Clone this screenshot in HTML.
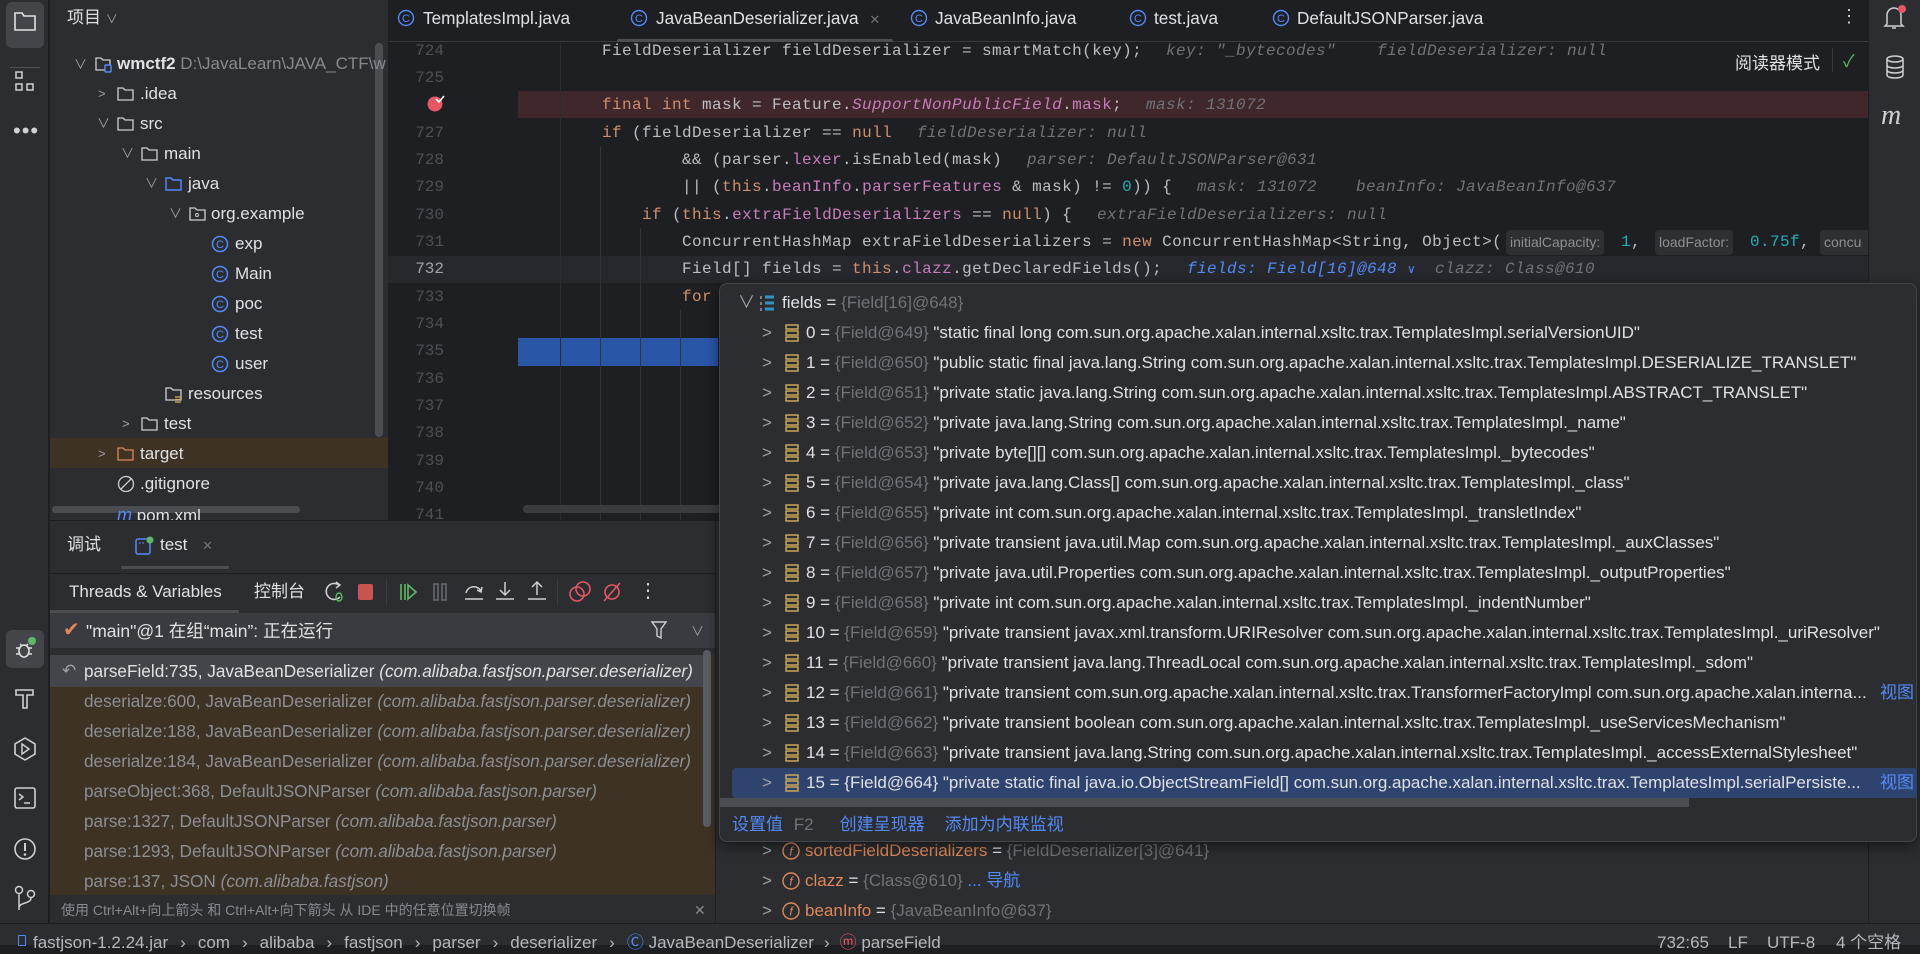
<!DOCTYPE html>
<html><head><meta charset="utf-8">
<style>
*{margin:0;padding:0;box-sizing:border-box}
body{width:1920px;height:945px;overflow:hidden;background:#1e1f22;font-family:"Liberation Sans","Noto Sans CJK SC",sans-serif;font-size:17px;color:#dfe1e5;position:relative}
.a{position:absolute;white-space:nowrap}
.code{font-family:"Liberation Mono",monospace;font-size:16px;letter-spacing:0.4px;color:#bcbec4;height:27px;line-height:27px}
.k{color:#cf8e6d}.f{color:#c77dbb}.fi{color:#c77dbb;font-style:italic}.n{color:#2aacb8}
.h{color:#6f737a;font-style:italic}
.ln{font-family:"Liberation Mono",monospace;font-size:16px;color:#4b5059;width:40px;text-align:right;left:404px;height:27px;line-height:27px}
.row{height:30px;line-height:30px}
.g{color:#868a91}
.fr{color:#8c8f94}
.fr i,.fr0 i{font-style:italic}
.chev{color:#9da0a8;font-size:13px}
.vrow{height:30px;line-height:30px;font-size:17px}
.frm{font-size:17.2px}
.blue{color:#548af7}
.tab{font-size:17.2px}
.sb{line-height:22px;color:#b4b8bf;font-size:17px;top:932px}
</style></head><body>

<!-- left tool strip -->
<div class="a" style="left:0;top:0;width:49px;height:923px;background:#2b2d30;border-right:1px solid #1e1f22"></div>
<div class="a" style="left:6px;top:2px;width:38px;height:46px;border-radius:6px;background:#43454a"></div>
<svg class="a" style="left:13px;top:10px" width="24" height="22" viewBox="0 0 24 22"><path d="M2 3h7l2 3h11v14H2z" fill="none" stroke="#dfe1e5" stroke-width="1.6"/></svg>
<div class="a" style="left:10px;top:67px;width:30px;height:1px;background:#4e5157"></div>
<svg class="a" style="left:14px;top:70px" width="22" height="24"><rect x="2" y="2" width="6" height="6" fill="none" stroke="#ced0d6" stroke-width="1.5"/><rect x="2" y="14" width="6" height="6" fill="none" stroke="#ced0d6" stroke-width="1.5"/><rect x="13" y="14" width="6" height="6" fill="none" stroke="#ced0d6" stroke-width="1.5"/></svg>
<div class="a" style="left:13px;top:118px;font-size:22px;color:#ced0d6;letter-spacing:1px">•••</div>
<div class="a" style="left:6px;top:630px;width:38px;height:38px;border-radius:6px;background:#43454a"></div>
<svg class="a" style="left:12px;top:636px" width="26" height="26"><ellipse cx="12" cy="15" rx="5" ry="6" fill="none" stroke="#dfe1e5" stroke-width="1.6"/><path d="M4 12h3M4 18h3M17 12h3M17 18h3M8 8l2 2M16 8l-2 2" stroke="#dfe1e5" stroke-width="1.5"/><circle cx="20" cy="5" r="4" fill="#5fb865"/></svg>
<svg class="a" style="left:13px;top:686px" width="24" height="26"><path d="M3 4h17v5H14v13h-4V9H3z" fill="none" stroke="#ced0d6" stroke-width="1.6"/></svg>
<svg class="a" style="left:12px;top:736px" width="26" height="26"><path d="M13 2l10 6v10l-10 6-10-6V8z" fill="none" stroke="#ced0d6" stroke-width="1.6"/><path d="M10 8l7 5-7 5z" fill="none" stroke="#ced0d6" stroke-width="1.5"/></svg>
<svg class="a" style="left:13px;top:786px" width="24" height="24"><rect x="2" y="2" width="20" height="20" rx="2" fill="none" stroke="#ced0d6" stroke-width="1.6"/><path d="M6 8l4 3-4 3M11 17h6" stroke="#ced0d6" stroke-width="1.5" fill="none"/></svg>
<svg class="a" style="left:12px;top:836px" width="26" height="26"><circle cx="13" cy="13" r="10" fill="none" stroke="#ced0d6" stroke-width="1.6"/><path d="M13 7v8" stroke="#ced0d6" stroke-width="2"/><circle cx="13" cy="18.5" r="1.3" fill="#ced0d6"/></svg>
<svg class="a" style="left:13px;top:884px" width="24" height="28"><circle cx="6" cy="6" r="3.5" fill="none" stroke="#ced0d6" stroke-width="1.5"/><circle cx="18" cy="10" r="3.5" fill="none" stroke="#ced0d6" stroke-width="1.5"/><path d="M6 10v16M18 14c0 6-12 4-12 10" fill="none" stroke="#ced0d6" stroke-width="1.5"/></svg>

<!-- project panel -->
<div class="a" style="left:50px;top:0;width:338px;height:520px;background:#2b2d30;overflow:hidden"></div>
<div class="a" style="left:67px;top:7px;font-size:17px;line-height:22px">项目 <span style="font-size:12px;color:#9da0a8">∨</span></div>
<div class="a" style="left:50px;top:438px;width:338px;height:30px;background:#3d3223"></div>
<div class="a" style="left:375px;top:43px;width:8px;height:394px;border-radius:4px;background:#4a4d52"></div>
<div class="a" style="left:52px;top:506px;width:248px;height:7px;border-radius:4px;background:#4a4d52"></div>

<div class="a row" style="left:74px;top:49px"><span class="chev">∨</span></div>
<svg class="a" style="left:95px;top:56px" width="18" height="17"><path d="M1 2h5l2 2h7v10H1z" fill="none" stroke="#ced0d6" stroke-width="1.3"/><rect x="10" y="9" width="6" height="7" rx="1" fill="#2b2d30" stroke="#548af7" stroke-width="1.4"/></svg>
<div class="a row" style="left:117px;top:49px;font-weight:bold;width:270px;overflow:hidden">wmctf2 <span class="g" style="font-weight:normal">D:\JavaLearn\JAVA_CTF\w</span></div>

<div class="a row chev" style="left:98px;top:79px">&gt;</div>
<svg class="a" style="left:117px;top:86px" width="18" height="16"><path d="M1 2h5l2 2h8v10H1z" fill="none" stroke="#ced0d6" stroke-width="1.3"/></svg>
<div class="a row" style="left:140px;top:79px">.idea</div>
<div class="a row chev" style="left:97px;top:109px">∨</div>
<svg class="a" style="left:117px;top:116px" width="18" height="16"><path d="M1 2h5l2 2h8v10H1z" fill="none" stroke="#ced0d6" stroke-width="1.3"/></svg>
<div class="a row" style="left:140px;top:109px">src</div>
<div class="a row chev" style="left:121px;top:139px">∨</div>
<svg class="a" style="left:141px;top:146px" width="18" height="16"><path d="M1 2h5l2 2h8v10H1z" fill="none" stroke="#ced0d6" stroke-width="1.3"/></svg>
<div class="a row" style="left:164px;top:139px">main</div>
<div class="a row chev" style="left:145px;top:169px">∨</div>
<svg class="a" style="left:165px;top:176px" width="18" height="16"><path d="M1 2h5l2 2h8v10H1z" fill="none" stroke="#548af7" stroke-width="1.4"/></svg>
<div class="a row" style="left:188px;top:169px">java</div>
<div class="a row chev" style="left:169px;top:199px">∨</div>
<svg class="a" style="left:189px;top:206px" width="18" height="16"><path d="M1 2h5l2 2h8v10H1z" fill="none" stroke="#ced0d6" stroke-width="1.3"/><circle cx="8" cy="9" r="1.5" fill="none" stroke="#ced0d6"/></svg>
<div class="a row" style="left:211px;top:199px">org.example</div>

<svg class="a" style="left:211px;top:235px" width="18" height="18"><circle cx="9" cy="9" r="7.5" fill="none" stroke="#548af7" stroke-width="1.5"/><text x="9" y="13" font-size="11" fill="#548af7" text-anchor="middle" font-family="Liberation Sans">C</text></svg>
<div class="a row" style="left:235px;top:229px">exp</div>
<svg class="a" style="left:211px;top:265px" width="18" height="18"><circle cx="9" cy="9" r="7.5" fill="none" stroke="#548af7" stroke-width="1.5"/><text x="9" y="13" font-size="11" fill="#548af7" text-anchor="middle" font-family="Liberation Sans">C</text></svg>
<div class="a row" style="left:235px;top:259px">Main</div>
<svg class="a" style="left:211px;top:295px" width="18" height="18"><circle cx="9" cy="9" r="7.5" fill="none" stroke="#548af7" stroke-width="1.5"/><text x="9" y="13" font-size="11" fill="#548af7" text-anchor="middle" font-family="Liberation Sans">C</text></svg>
<div class="a row" style="left:235px;top:289px">poc</div>
<svg class="a" style="left:211px;top:325px" width="18" height="18"><circle cx="9" cy="9" r="7.5" fill="none" stroke="#548af7" stroke-width="1.5"/><text x="9" y="13" font-size="11" fill="#548af7" text-anchor="middle" font-family="Liberation Sans">C</text></svg>
<div class="a row" style="left:235px;top:319px">test</div>
<svg class="a" style="left:211px;top:355px" width="18" height="18"><circle cx="9" cy="9" r="7.5" fill="none" stroke="#548af7" stroke-width="1.5"/><text x="9" y="13" font-size="11" fill="#548af7" text-anchor="middle" font-family="Liberation Sans">C</text></svg>
<div class="a row" style="left:235px;top:349px">user</div>
<svg class="a" style="left:165px;top:386px" width="18" height="17"><path d="M1 2h5l2 2h8v10H1z" fill="none" stroke="#ced0d6" stroke-width="1.3"/><path d="M10 11h6M10 13.5h6M10 16h6" stroke="#d6ae58" stroke-width="1.2"/></svg>
<div class="a row" style="left:188px;top:379px">resources</div>
<div class="a row chev" style="left:122px;top:409px">&gt;</div>
<svg class="a" style="left:141px;top:416px" width="18" height="16"><path d="M1 2h5l2 2h8v10H1z" fill="none" stroke="#ced0d6" stroke-width="1.3"/></svg>
<div class="a row" style="left:164px;top:409px">test</div>
<div class="a row chev" style="left:98px;top:439px">&gt;</div>
<svg class="a" style="left:117px;top:446px" width="18" height="16"><path d="M1 2h5l2 2h8v10H1z" fill="none" stroke="#e0875a" stroke-width="1.3"/></svg>
<div class="a row" style="left:140px;top:439px">target</div>
<svg class="a" style="left:117px;top:475px" width="18" height="18"><circle cx="9" cy="9" r="7.5" fill="none" stroke="#ced0d6" stroke-width="1.3"/><path d="M4 14L14 4" stroke="#ced0d6" stroke-width="1.3"/></svg>
<div class="a row" style="left:140px;top:469px">.gitignore</div>
<div class="a" style="left:117px;top:500px;height:20px;overflow:hidden;line-height:30px;width:200px"><i style="color:#548af7;font-size:18px">m</i> pom.xml</div>

<!-- editor tabs -->
<div class="a" style="left:388px;top:0;width:1480px;height:42px;background:#1e1f22;border-bottom:1px solid #393b40"></div>
<div class="a" style="left:388px;top:0;width:1px;height:520px;background:#1e1f22"></div>
<svg class="a" style="left:397px;top:9px" width="18" height="18"><circle cx="9" cy="9" r="7.5" fill="none" stroke="#548af7" stroke-width="1.4"/><text x="9" y="13" font-size="11" fill="#548af7" text-anchor="middle" font-family="Liberation Sans">C</text></svg>
<div class="a tab" style="left:423px;top:7px;line-height:22px">TemplatesImpl.java</div>
<svg class="a" style="left:630px;top:9px" width="18" height="18"><circle cx="9" cy="9" r="7.5" fill="none" stroke="#548af7" stroke-width="1.4"/><text x="9" y="13" font-size="11" fill="#548af7" text-anchor="middle" font-family="Liberation Sans">C</text></svg>
<div class="a tab" style="left:656px;top:7px;line-height:22px">JavaBeanDeserializer.java <span style="color:#6f737a;font-size:13px;margin-left:6px">✕</span></div>
<div class="a" style="left:617px;top:39px;width:276px;height:3px;background:#4a4d52;border-radius:2px"></div>
<svg class="a" style="left:910px;top:9px" width="18" height="18"><circle cx="9" cy="9" r="7.5" fill="none" stroke="#548af7" stroke-width="1.4"/><text x="9" y="13" font-size="11" fill="#548af7" text-anchor="middle" font-family="Liberation Sans">C</text></svg>
<div class="a tab" style="left:935px;top:7px;line-height:22px">JavaBeanInfo.java</div>
<svg class="a" style="left:1129px;top:9px" width="18" height="18"><circle cx="9" cy="9" r="7.5" fill="none" stroke="#548af7" stroke-width="1.4"/><text x="9" y="13" font-size="11" fill="#548af7" text-anchor="middle" font-family="Liberation Sans">C</text></svg>
<div class="a tab" style="left:1154px;top:7px;line-height:22px">test.java</div>
<svg class="a" style="left:1272px;top:9px" width="18" height="18"><circle cx="9" cy="9" r="7.5" fill="none" stroke="#548af7" stroke-width="1.4"/><text x="9" y="13" font-size="11" fill="#548af7" text-anchor="middle" font-family="Liberation Sans">C</text></svg>
<div class="a tab" style="left:1297px;top:7px;line-height:22px">DefaultJSONParser.java</div>
<div class="a" style="left:1840px;top:6px;font-size:18px;color:#ced0d6;line-height:20px">⋮</div>

<!-- editor body -->
<div class="a" style="left:518px;top:91px;width:1350px;height:27px;background:#40272b"></div>
<div class="a" style="left:388px;top:256px;width:1480px;height:27px;background:#26282e"></div>
<div class="a" style="left:518px;top:338px;width:200px;height:28px;background:#2a56a8"></div>
<div class="a" style="left:560px;top:43px;width:1px;height:477px;background:#2b2d30"></div>
<div class="a" style="left:600px;top:146px;width:1px;height:374px;background:#313438"></div>
<div class="a" style="left:640px;top:228px;width:1px;height:292px;background:#313438"></div>
<div class="a" style="left:680px;top:310px;width:1px;height:210px;background:#313438"></div>
<div class="a" style="left:523px;top:505px;width:1330px;height:8px;border-radius:4px;background:#3a3c40"></div>

<div class="a ln" style="top:38px">724</div>
<div class="a ln" style="top:65px">725</div>
<svg class="a" style="left:426px;top:93px" width="20" height="20"><circle cx="9" cy="11" r="7.5" fill="#e55765"/><path d="M10 6l3 3 5-6" stroke="#fff" stroke-width="1.6" fill="none"/></svg>
<div class="a ln" style="top:120px">727</div>
<div class="a ln" style="top:147px">728</div>
<div class="a ln" style="top:174px">729</div>
<div class="a ln" style="top:202px">730</div>
<div class="a ln" style="top:229px">731</div>
<div class="a ln" style="top:256px;color:#a1a3ab">732</div>
<div class="a ln" style="top:284px">733</div>
<div class="a ln" style="top:311px">734</div>
<div class="a ln" style="top:338px">735</div>
<div class="a ln" style="top:366px">736</div>
<div class="a ln" style="top:393px">737</div>
<div class="a ln" style="top:420px">738</div>
<div class="a ln" style="top:448px">739</div>
<div class="a ln" style="top:475px">740</div>
<div class="a ln" style="top:502px;height:18px;overflow:hidden">741</div>

<div class="a code" style="left:602px;top:38px">FieldDeserializer fieldDeserializer = smartMatch(key);</div>
<div class="a code h" style="left:1166px;top:38px">key: "_bytecodes"</div>
<div class="a code h" style="left:1377px;top:38px">fieldDeserializer: null</div>
<div class="a code" style="left:602px;top:92px"><span class="k">final int</span> mask = Feature.<span class="fi">SupportNonPublicField</span>.<span class="f">mask</span>;</div>
<div class="a code h" style="left:1146px;top:92px">mask: 131072</div>
<div class="a code" style="left:602px;top:120px"><span class="k">if</span> (fieldDeserializer == <span class="k">null</span></div>
<div class="a code h" style="left:917px;top:120px">fieldDeserializer: null</div>
<div class="a code" style="left:682px;top:147px">&amp;&amp; (parser.<span class="f">lexer</span>.isEnabled(mask)</div>
<div class="a code h" style="left:1027px;top:147px">parser: DefaultJSONParser@631</div>
<div class="a code" style="left:682px;top:174px">|| (<span class="k">this</span>.<span class="f">beanInfo</span>.<span class="f">parserFeatures</span> &amp; mask) != <span class="n">0</span>)) {</div>
<div class="a code h" style="left:1197px;top:174px">mask: 131072</div>
<div class="a code h" style="left:1356px;top:174px">beanInfo: JavaBeanInfo@637</div>
<div class="a code" style="left:642px;top:202px"><span class="k">if</span> (<span class="k">this</span>.<span class="f">extraFieldDeserializers</span> == <span class="k">null</span>) {</div>
<div class="a code h" style="left:1097px;top:202px">extraFieldDeserializers: null</div>
<div class="a code" style="left:682px;top:229px">ConcurrentHashMap extraFieldDeserializers = <span class="k">new</span> ConcurrentHashMap&lt;String, Object&gt;(</div>
<div class="a" style="left:1506px;top:230px;height:25px;line-height:25px;padding:0 4px;background:#2d2f33;border-radius:4px;color:#8c8f94;font-size:14px">initialCapacity:</div>
<div class="a code" style="left:1621px;top:229px"><span class="n">1</span>,</div>
<div class="a" style="left:1655px;top:230px;height:25px;line-height:25px;padding:0 4px;background:#2d2f33;border-radius:4px;color:#8c8f94;font-size:14px">loadFactor:</div>
<div class="a code" style="left:1750px;top:229px"><span class="n">0.75f</span>,</div>
<div class="a" style="left:1820px;top:230px;width:48px;height:25px;line-height:25px;padding:0 4px;background:#2d2f33;border-radius:4px 0 0 4px;color:#8c8f94;font-size:14px;overflow:hidden">concu</div>
<div class="a code" style="left:682px;top:256px">Field[] fields = <span class="k">this</span>.<span class="f">clazz</span>.getDeclaredFields();</div>
<div class="a code" style="left:1187px;top:256px;color:#548af7;font-style:italic">fields: Field[16]@648 <span style="font-style:normal;font-size:12px">∨</span></div>
<div class="a code h" style="left:1435px;top:256px">clazz: Class@610</div>
<div class="a code" style="left:682px;top:284px"><span class="k">for</span></div>

<div class="a" style="left:1735px;top:49px;font-size:17px;color:#dfe1e5">阅读器模式</div>
<div class="a" style="left:1832px;top:48px;width:1px;height:24px;background:#393b40"></div>
<div class="a" style="left:1843px;top:47px;color:#5fb865;font-size:17px">✓</div>

<!-- right strip -->
<div class="a" style="left:1868px;top:0;width:52px;height:923px;background:#2b2d30;border-left:1px solid #1e1f22"></div>
<svg class="a" style="left:1882px;top:4px" width="26" height="28"><path d="M5 20V11a7 7 0 0 1 14 0v9l2 2H3z" fill="none" stroke="#ced0d6" stroke-width="1.5"/><path d="M10 24h4" stroke="#ced0d6" stroke-width="1.5"/><circle cx="20" cy="5" r="4" fill="#e55765"/></svg>
<svg class="a" style="left:1884px;top:54px" width="22" height="26"><ellipse cx="11" cy="5" rx="8" ry="3" fill="none" stroke="#ced0d6" stroke-width="1.5"/><path d="M3 5v16c0 4 16 4 16 0V5M3 11c0 4 16 4 16 0M3 16c0 4 16 4 16 0" fill="none" stroke="#ced0d6" stroke-width="1.5"/></svg>
<div class="a" style="left:1881px;top:100px;font-size:28px;font-style:italic;color:#ced0d6;font-family:'Liberation Serif',serif">m</div>

<!-- bottom debug panel -->
<div class="a" style="left:50px;top:520px;width:1818px;height:403px;background:#2b2d30;border-top:1px solid #1e1f22"></div>
<div class="a" style="left:67px;top:534px;line-height:22px">调试</div>
<svg class="a" style="left:135px;top:536px" width="20" height="20"><rect x="1" y="3" width="14" height="15" rx="2" fill="none" stroke="#548af7" stroke-width="1.5"/><path d="M4 7h2M7 7h2" stroke="#548af7"/><circle cx="15" cy="4" r="3.5" fill="#5fb865"/></svg>
<div class="a" style="left:160px;top:534px;line-height:22px">test <span style="color:#6f737a;font-size:13px;margin-left:10px">✕</span></div>
<div class="a" style="left:121px;top:566px;width:108px;height:3px;border-radius:2px;background:#4a4d52"></div>
<div class="a" style="left:50px;top:573px;width:666px;height:1px;background:#1e1f22"></div>
<div class="a" style="left:69px;top:581px;line-height:22px">Threads &amp; Variables</div>
<div class="a" style="left:50px;top:610px;width:189px;height:3px;background:#4a4d52"></div>
<div class="a" style="left:254px;top:581px;line-height:22px">控制台</div>
<svg class="a" style="left:323px;top:580px" width="24" height="24"><path d="M16 5a8 8 0 1 0 1 12" fill="none" stroke="#ced0d6" stroke-width="1.6"/><path d="M13 2l4 3-4 3" fill="none" stroke="#ced0d6" stroke-width="1.5"/><ellipse cx="16" cy="17" rx="3" ry="4" fill="none" stroke="#5fb865" stroke-width="1.4"/></svg>
<div class="a" style="left:358px;top:584px;width:15px;height:16px;border-radius:2px;background:#c75450"></div>
<div class="a" style="left:386px;top:578px;width:1px;height:28px;background:#393b40"></div>
<svg class="a" style="left:398px;top:582px" width="20" height="20"><path d="M3 2v16M7 2v16" stroke="#5fb865" stroke-width="1.6"/><path d="M10 3l8 7-8 7z" fill="none" stroke="#5fb865" stroke-width="1.6"/></svg>
<svg class="a" style="left:432px;top:582px" width="16" height="20"><rect x="2" y="2" width="4" height="16" fill="none" stroke="#6f737a" stroke-width="1.4"/><rect x="10" y="2" width="4" height="16" fill="none" stroke="#6f737a" stroke-width="1.4"/></svg>
<svg class="a" style="left:463px;top:580px" width="22" height="24"><path d="M3 13c2-8 12-8 15-2M14 10l4 2 1-5" fill="none" stroke="#ced0d6" stroke-width="1.5"/><path d="M2 19h18" stroke="#ced0d6" stroke-width="1.6"/></svg>
<svg class="a" style="left:494px;top:580px" width="22" height="24"><path d="M11 2v13M6 10l5 5 5-5" fill="none" stroke="#ced0d6" stroke-width="1.5"/><path d="M2 19h18" stroke="#ced0d6" stroke-width="1.6"/></svg>
<svg class="a" style="left:526px;top:580px" width="22" height="24"><path d="M11 15V2M6 7l5-5 5 5" fill="none" stroke="#ced0d6" stroke-width="1.5"/><path d="M2 19h18" stroke="#ced0d6" stroke-width="1.6"/></svg>
<div class="a" style="left:557px;top:578px;width:1px;height:28px;background:#393b40"></div>
<svg class="a" style="left:568px;top:580px" width="24" height="24"><circle cx="9" cy="14" r="7" fill="none" stroke="#e55765" stroke-width="1.6"/><circle cx="15" cy="9" r="7" fill="none" stroke="#e55765" stroke-width="1.6"/></svg>
<svg class="a" style="left:600px;top:580px" width="24" height="24"><circle cx="12" cy="12" r="7" fill="none" stroke="#e55765" stroke-width="1.6"/><path d="M4 21L20 3" stroke="#e55765" stroke-width="1.6"/></svg>
<div class="a" style="left:638px;top:578px;font-size:20px;color:#ced0d6">⋮</div>

<div class="a" style="left:50px;top:613px;width:666px;height:35px;background:#393b40"></div>
<div class="a" style="left:63px;top:619px;color:#e0875a;font-size:20px;line-height:22px">✔</div>
<div class="a" style="left:86px;top:620px;line-height:22px;font-size:17.5px">"main"@1 在组“main”: 正在运行</div>
<svg class="a" style="left:650px;top:620px" width="18" height="20"><path d="M2 2h14l-5 7v9l-4-2V9z" fill="none" stroke="#ced0d6" stroke-width="1.4"/></svg>
<div class="a" style="left:691px;top:621px;font-size:13px;color:#9da0a8">∨</div>

<div class="a" style="left:50px;top:655px;width:665px;height:240px;background:#3d3223"></div>
<div class="a" style="left:50px;top:655px;width:655px;height:32px;background:#43454a"></div>
<div class="a" style="left:703px;top:650px;width:8px;height:177px;background:#5a5d63;border-radius:4px"></div>
<div class="a vrow" style="left:62px;top:656px;color:#9da0a8">↶</div>
<div class="a vrow frm" style="left:84px;top:656px;color:#dfe1e5">parseField:735, JavaBeanDeserializer <i>(com.alibaba.fastjson.parser.deserializer)</i></div>
<div class="a vrow fr frm" style="left:84px;top:686px">deserialze:600, JavaBeanDeserializer <i>(com.alibaba.fastjson.parser.deserializer)</i></div>
<div class="a vrow fr frm" style="left:84px;top:716px">deserialze:188, JavaBeanDeserializer <i>(com.alibaba.fastjson.parser.deserializer)</i></div>
<div class="a vrow fr frm" style="left:84px;top:746px">deserialze:184, JavaBeanDeserializer <i>(com.alibaba.fastjson.parser.deserializer)</i></div>
<div class="a vrow fr frm" style="left:84px;top:776px">parseObject:368, DefaultJSONParser <i>(com.alibaba.fastjson.parser)</i></div>
<div class="a vrow fr frm" style="left:84px;top:806px">parse:1327, DefaultJSONParser <i>(com.alibaba.fastjson.parser)</i></div>
<div class="a vrow fr frm" style="left:84px;top:836px">parse:1293, DefaultJSONParser <i>(com.alibaba.fastjson.parser)</i></div>
<div class="a vrow fr frm" style="left:84px;top:866px">parse:137, JSON <i>(com.alibaba.fastjson)</i></div>
<div class="a" style="left:61px;top:900px;font-size:14px;color:#868a91;line-height:20px">使用 Ctrl+Alt+向上箭头 和 Ctrl+Alt+向下箭头 从 IDE 中的任意位置切换帧</div>
<div class="a" style="left:694px;top:900px;font-size:14px;color:#868a91;line-height:20px">✕</div>
<div class="a" style="left:715px;top:520px;width:1px;height:403px;background:#1e1f22"></div>

<!-- variables under popup -->
<div class="a vrow chev" style="left:762px;top:836px">&gt;</div>
<svg class="a" style="left:781px;top:841px" width="20" height="20"><circle cx="10" cy="10" r="8" fill="none" stroke="#e0875a" stroke-width="1.4"/><text x="10" y="14.5" font-size="12" font-style="italic" fill="#e0875a" text-anchor="middle" font-family="Liberation Sans">f</text></svg>
<div class="a vrow" style="left:805px;top:836px;color:#e0875a">sortedFieldDeserializers <span style="color:#dfe1e5">=</span> <span style="color:#6f737a">{FieldDeserializer[3]@641}</span></div>
<div class="a vrow chev" style="left:762px;top:866px">&gt;</div>
<svg class="a" style="left:781px;top:871px" width="20" height="20"><circle cx="10" cy="10" r="8" fill="none" stroke="#e0875a" stroke-width="1.4"/><text x="10" y="14.5" font-size="12" font-style="italic" fill="#e0875a" text-anchor="middle" font-family="Liberation Sans">f</text></svg>
<div class="a vrow" style="left:805px;top:866px;color:#e0875a">clazz <span style="color:#dfe1e5">=</span> <span style="color:#6f737a">{Class@610}</span> <span class="blue">... 导航</span></div>
<div class="a vrow chev" style="left:762px;top:896px">&gt;</div>
<svg class="a" style="left:781px;top:901px" width="20" height="20"><circle cx="10" cy="10" r="8" fill="none" stroke="#e0875a" stroke-width="1.4"/><text x="10" y="14.5" font-size="12" font-style="italic" fill="#e0875a" text-anchor="middle" font-family="Liberation Sans">f</text></svg>
<div class="a vrow" style="left:805px;top:896px;color:#e0875a;height:27px;overflow:hidden">beanInfo <span style="color:#dfe1e5">=</span> <span style="color:#6f737a">{JavaBeanInfo@637}</span></div>

<!-- popup -->
<div class="a" style="left:719px;top:283px;width:1198px;height:559px;background:#2b2d30;border:1px solid #43454a;border-radius:8px;box-shadow:0 4px 14px rgba(0,0,0,.5)"></div>
<div class="a" style="left:732px;top:768px;width:1185px;height:30px;background:#2e436e;border-radius:4px"></div>
<div class="a" style="left:720px;top:798px;width:969px;height:9px;background:#4a4d52"></div>
<div class="a vrow chev" style="left:738px;top:288px">∨</div>
<svg class="a" style="left:759px;top:294px" width="16" height="18"><path d="M6 3h9M6 9h9M6 15h9" stroke="#3592c4" stroke-width="3"/><path d="M2 2v3M2 8v3M2 14v3" stroke="#ced0d6" stroke-width="1"/></svg>
<div class="a vrow" style="left:782px;top:288px">fields = <span style="color:#6f737a">{Field[16]@648}</span></div>

<div id="rows"></div>
<div class="a" style="left:732px;top:813px;font-size:17px;line-height:24px"><span class="blue">设置值</span> <span style="color:#6f737a;margin-left:6px">F2</span><span class="blue" style="margin-left:26px">创建呈现器</span><span class="blue" style="margin-left:20px">添加为内联监视</span></div>

<!-- status bar -->
<div class="a" style="left:0;top:923px;width:1920px;height:22px;background:#2b2d30;border-top:1px solid #1e1f22"></div>
<div class="a" style="left:18px;top:935px;width:8px;height:11px;border:1.5px solid #548af7;border-radius:1px"></div>
<div class="a sb" style="left:33px">fastjson-1.2.24.jar<span style="margin:0 12px">›</span>com<span style="margin:0 12px">›</span>alibaba<span style="margin:0 12px">›</span>fastjson<span style="margin:0 12px">›</span>parser<span style="margin:0 12px">›</span>deserializer<span style="margin:0 12px">›</span><span style="color:#548af7">Ⓒ</span> JavaBeanDeserializer<span style="margin:0 10px">›</span><span style="color:#e55765">ⓜ</span> parseField</div>
<div class="a sb" style="left:1657px">732:65</div>
<div class="a sb" style="left:1728px">LF</div>
<div class="a sb" style="left:1767px">UTF-8</div>
<div class="a sb" style="left:1836px">4 个空格</div>

<script>
var d=[
['0','649','static final long com.sun.org.apache.xalan.internal.xsltc.trax.TemplatesImpl.serialVersionUID"'],
['1','650','public static final java.lang.String com.sun.org.apache.xalan.internal.xsltc.trax.TemplatesImpl.DESERIALIZE_TRANSLET"'],
['2','651','private static java.lang.String com.sun.org.apache.xalan.internal.xsltc.trax.TemplatesImpl.ABSTRACT_TRANSLET"'],
['3','652','private java.lang.String com.sun.org.apache.xalan.internal.xsltc.trax.TemplatesImpl._name"'],
['4','653','private byte[][] com.sun.org.apache.xalan.internal.xsltc.trax.TemplatesImpl._bytecodes"'],
['5','654','private java.lang.Class[] com.sun.org.apache.xalan.internal.xsltc.trax.TemplatesImpl._class"'],
['6','655','private int com.sun.org.apache.xalan.internal.xsltc.trax.TemplatesImpl._transletIndex"'],
['7','656','private transient java.util.Map com.sun.org.apache.xalan.internal.xsltc.trax.TemplatesImpl._auxClasses"'],
['8','657','private java.util.Properties com.sun.org.apache.xalan.internal.xsltc.trax.TemplatesImpl._outputProperties"'],
['9','658','private int com.sun.org.apache.xalan.internal.xsltc.trax.TemplatesImpl._indentNumber"'],
['10','659','private transient javax.xml.transform.URIResolver com.sun.org.apache.xalan.internal.xsltc.trax.TemplatesImpl._uriResolver"'],
['11','660','private transient java.lang.ThreadLocal com.sun.org.apache.xalan.internal.xsltc.trax.TemplatesImpl._sdom"'],
['12','661','private transient com.sun.org.apache.xalan.internal.xsltc.trax.TransformerFactoryImpl com.sun.org.apache.xalan.interna...',1],
['13','662','private transient boolean com.sun.org.apache.xalan.internal.xsltc.trax.TemplatesImpl._useServicesMechanism"'],
['14','663','private transient java.lang.String com.sun.org.apache.xalan.internal.xsltc.trax.TemplatesImpl._accessExternalStylesheet"'],
['15','664','private static final java.io.ObjectStreamField[] com.sun.org.apache.xalan.internal.xsltc.trax.TemplatesImpl.serialPersiste...',1]
];
var h='';
d.forEach(function(r,i){var t=318+30*i;
h+='<div class="a vrow chev" style="left:762px;top:'+t+'px">&gt;</div>';
h+='<svg class="a" style="left:785px;top:'+(t+6)+'px" width="14" height="18"><rect x="1" y="1" width="12" height="4" fill="none" stroke="#d6ae58" stroke-width="1.4"/><rect x="1" y="7" width="12" height="4" fill="none" stroke="#d6ae58" stroke-width="1.4"/><rect x="1" y="13" width="12" height="4" fill="none" stroke="#d6ae58" stroke-width="1.4"/></svg>';
h+='<div class="a vrow" style="left:806px;top:'+t+'px;max-width:'+(r[3]?1072:1100)+'px;overflow:hidden">'+r[0]+' = <span style="color:'+(i==15?'#dfe1e5':'#6f737a')+'">{Field@'+r[1]+'}</span> "'+r[2]+'</div>';
if(r[3])h+='<div class="a vrow blue" style="left:1880px;top:'+t+'px">视图</div>';
});
document.getElementById('rows').outerHTML=h;
</script>
</body></html>
